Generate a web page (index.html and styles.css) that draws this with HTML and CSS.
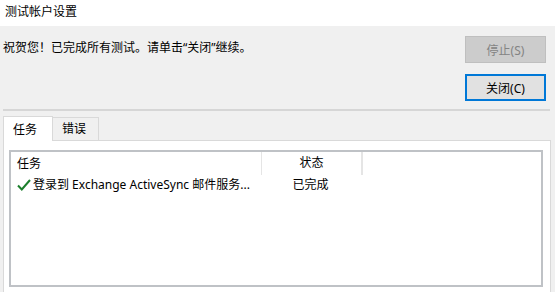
FILE: index.html
```html
<!DOCTYPE html>
<html lang="zh-CN">
  <head>
    <meta charset="UTF-8" />
    <title>测试帐户设置</title>
    <link rel="stylesheet" href="styles.css">
  </head>
  <body>
    <div class="titlebar">测试帐户设置</div>

    <div class="top">
      <p class="message">祝贺您！已完成所有测试。请单击“关闭”继续。</p>
      <div class="buttons">
        <button class="btn" disabled>停止(S)</button>
        <button class="btn btn-default">关闭(C)</button>
      </div>
    </div>

    <div class="separator"></div>

    <!-- 选项卡 -->
    <div class="tabs">
      <div class="tab active">任务</div>
      <div class="tab">错误</div>
    </div>

    <div class="panel">
      <div class="listview">
        <div class="lv-header">
          <div class="col col-task">任务</div>
          <div class="col col-status">状态</div>
          <div class="col col-rest"></div>
        </div>
        <div class="lv-row">
          <div class="col col-task">
            <svg class="check" width="14" height="14" viewBox="0 0 14 14">
              <path d="M1 7.5 L4.8 11.5 L13 2" fill="none" stroke="#1c7f2c" stroke-width="2" />
            </svg>
            登录到 Exchange ActiveSync 邮件服务...
          </div>
          <div class="col col-status">已完成</div>
        </div>
      </div>
    </div>
  </body>
</html>
```

FILE: styles.css
```css
body {
  margin: 0;
  background: #f0f0f0;
  font-family: "Noto Sans", "Noto Sans CJK SC", sans-serif;
  font-size: 12px;
  color: #000;
  overflow: hidden;
}
.titlebar {
  background: #fff;
  height: 26px;
  line-height: 24px;
  padding-left: 5px;
}
.top {
  display: flex;
  justify-content: space-between;
  padding: 10px 9px 0 3px;
}
.message {
  margin: 2px 0 0;
  line-height: 20px;
}
.buttons {
  display: flex;
  flex-direction: column;
  gap: 11px;
}
.btn {
  width: 81px;
  height: 27px;
  font-family: inherit;
  font-size: 12px;
  background: #e1e1e1;
  border: 1px solid #adadad;
  color: #000;
  padding: 0;
}
.btn:disabled {
  background: #cccccc;
  border-color: #bfbfbf;
  color: #838383;
}
.btn-default {
  border: 2px solid #0078d7;
}
.separator {
  height: 2px;
  background: #d6d6d6;
  margin: 8px 5px 0 3px;
}
.tabs {
  display: flex;
  margin: 4px 0 0 3px;
  height: 25px;
  align-items: flex-end;
}
.tab {
  height: 22px;
  line-height: 22px;
  padding: 0 12px 0 9px;
  background: #f0f0f0;
  border: 1px solid #d9d9d9;
  border-bottom: none;
  border-left: none;
}
.tab.active {
  height: 25px;
  line-height: 25px;
  width: 50px;
  box-sizing: border-box;
  background: #fff;
  border-left: 1px solid #d9d9d9;
  position: relative;
  z-index: 1;
  margin-bottom: -1px;
}
.panel {
  background: #fff;
  border: 1px solid #d9d9d9;
  margin: 0 4px 0 3px;
  padding: 9px 7px 12px 5px;
}
.listview {
  height: 133px;
  border: 2px solid #bfc2c6;
  background: #fff;
}
.lv-header {
  display: flex;
  height: 23px;
  line-height: 22px;
}
.lv-header .col {
  border-right: 1px solid #e5e5e5;
}
.lv-header .col-rest {
  width: 0;
}
.col-task {
  width: 244px;
  padding-left: 6px;
  display: flex;
  align-items: center;
  white-space: nowrap;
}
.col-status {
  width: 99px;
  text-align: center;
}
.lv-row {
  display: flex;
  height: 20px;
  line-height: 20px;
}
.check {
  margin-right: 2px;
}
```
